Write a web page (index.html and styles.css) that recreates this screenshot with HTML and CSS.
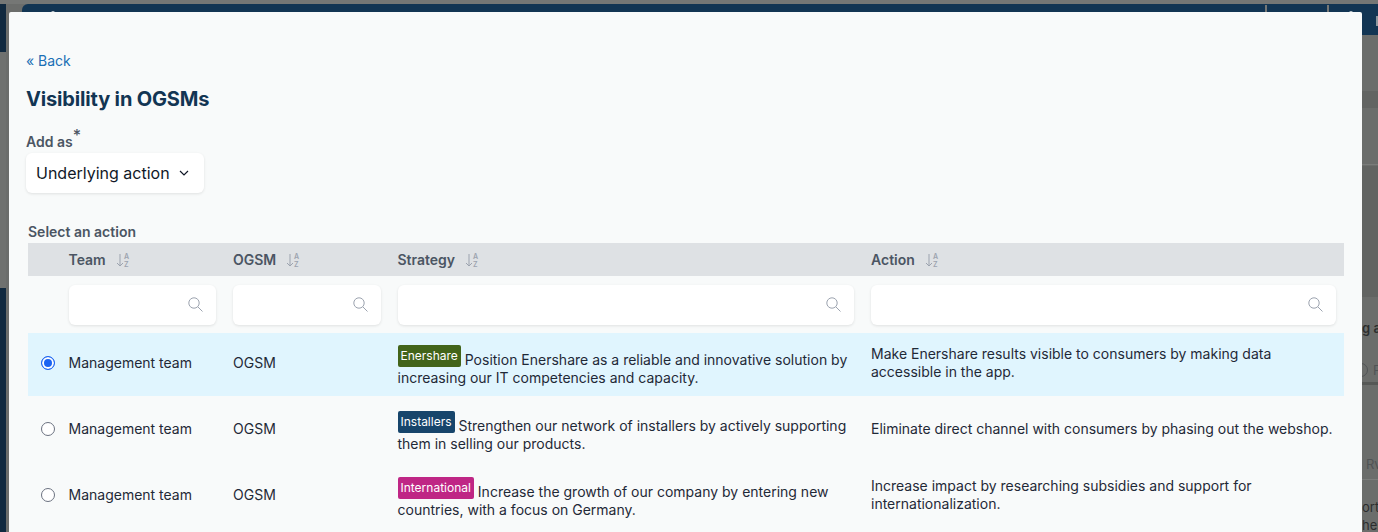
FILE: index.html
```html
<!DOCTYPE html>
<html lang="en">
<head>
<meta charset="utf-8">
<title>Visibility in OGSMs</title>
<link rel="stylesheet" href="styles.css">
</head>
<body>
<div class="backdrop">
  <div class="side-dark side-top"></div>
  <div class="side-dark side-bottom"></div>
  <div class="side-gray"></div>
  <div class="top-bar"><span class="sep sep-a"></span><span class="sep sep-b"></span><span class="chip"></span></div>
  <div class="bump bump-a"></div>
  <div class="bump bump-b"></div>
  <div class="band band-1"></div>
  <div class="band band-2"></div>
  <div class="band band-3"></div>
  <div class="band band-4"></div>
  <div class="band band-5"></div>
  <div class="peek peek-1">g a</div>
  <div class="peek-ring"></div>
  <div class="peek peek-2">F</div>
  <div class="peek peek-3">Rv</div>
  <div class="peek peek-4">ort<br>her</div>
</div>
<main class="modal">
  <a class="back" href="#">« Back</a>
  <h1 class="title">Visibility in OGSMs</h1>
  <label class="label label-add">Add as<sup class="req">*</sup></label>
  <div class="select">
    <span>Underlying action</span>
    <svg class="chev" width="10" height="6" viewBox="0 0 10 6"><path d="M1 1l4 4 4-4" fill="none" stroke="#111827" stroke-width="1.2"/></svg>
  </div>
  <div class="label label-table">Select an action</div>
  <div class="table">
    <div class="row head">
      <div></div>
      <div class="hcell">Team <svg class="sort" width="14" height="14" viewBox="0 0 14 14"><path d="M4 1v12M1 10l3 3 3-3" fill="none" stroke="#9ca3af"/><text x="8" y="6" class="az">A</text><text x="8" y="13.500" class="az">Z</text></svg></div>
      <div class="hcell">OGSM <svg class="sort" width="14" height="14" viewBox="0 0 14 14"><path d="M4 1v12M1 10l3 3 3-3" fill="none" stroke="#9ca3af"/><text x="8" y="6" class="az">A</text><text x="8" y="13.500" class="az">Z</text></svg></div>
      <div class="hcell">Strategy <svg class="sort" width="14" height="14" viewBox="0 0 14 14"><path d="M4 1v12M1 10l3 3 3-3" fill="none" stroke="#9ca3af"/><text x="8" y="6" class="az">A</text><text x="8" y="13.500" class="az">Z</text></svg></div>
      <div class="hcell">Action <svg class="sort" width="14" height="14" viewBox="0 0 14 14"><path d="M4 1v12M1 10l3 3 3-3" fill="none" stroke="#9ca3af"/><text x="8" y="6" class="az">A</text><text x="8" y="13.500" class="az">Z</text></svg></div>
    </div>
    <div class="row filters">
      <div></div>
      <div class="search"><svg width="15" height="15" viewBox="0 0 15 15"><circle cx="6" cy="6" r="5.200" fill="none" stroke="#9ca3af"/><path d="M9.800 9.800L14.500 14.500" stroke="#9ca3af"/></svg></div>
      <div class="search"><svg width="15" height="15" viewBox="0 0 15 15"><circle cx="6" cy="6" r="5.200" fill="none" stroke="#9ca3af"/><path d="M9.800 9.800L14.500 14.500" stroke="#9ca3af"/></svg></div>
      <div class="search"><svg width="15" height="15" viewBox="0 0 15 15"><circle cx="6" cy="6" r="5.200" fill="none" stroke="#9ca3af"/><path d="M9.800 9.800L14.500 14.500" stroke="#9ca3af"/></svg></div>
      <div class="search"><svg width="15" height="15" viewBox="0 0 15 15"><circle cx="6" cy="6" r="5.200" fill="none" stroke="#9ca3af"/><path d="M9.800 9.800L14.500 14.500" stroke="#9ca3af"/></svg></div>
    </div>
    <div class="row item selected">
      <div class="radio-cell"><span class="radio on"></span></div>
      <div>Management team</div>
      <div>OGSM</div>
      <div class="strategy"><span class="tag green">Enershare</span> Position Enershare as a reliable and innovative solution by increasing our IT competencies and capacity.</div>
      <div>Make Enershare results visible to consumers by making data accessible in the app.</div>
    </div>
    <div class="row item">
      <div class="radio-cell"><span class="radio"></span></div>
      <div>Management team</div>
      <div>OGSM</div>
      <div class="strategy"><span class="tag navy">Installers</span> Strengthen our network of installers by actively supporting them in selling our products.</div>
      <div>Eliminate direct channel with consumers by phasing out the webshop.</div>
    </div>
    <div class="row item">
      <div class="radio-cell"><span class="radio"></span></div>
      <div>Management team</div>
      <div>OGSM</div>
      <div class="strategy"><span class="tag pink">International</span> Increase the growth of our company by entering new countries, with a focus on Germany.</div>
      <div>Increase impact by researching subsidies and support for internationalization.</div>
    </div>
  </div>
</main>
</body>
</html>
```
FILE: styles.css
```css
* { box-sizing: border-box; }
html, body { margin: 0; height: 100%; overflow: hidden; }
body { background: #6b6d6b; font-family: Inter, "Liberation Sans", sans-serif; color: #1f2937; position: relative; }
.backdrop { position: absolute; inset: 0; overflow: hidden; }
.side-dark { position: absolute; left: 0; width: 6px; background: #10293f; }
.side-top { top: 0; height: 52px; }
.side-bottom { top: 288px; bottom: 0; }
.side-gray { position: absolute; left: 0; top: 52px; width: 6px; height: 236px; background: #6f716f; }
.top-bar { position: absolute; left: 22px; right: 0; top: 4px; height: 31px; background: #123553; border-radius: 6px 0 0 0; }
.top-bar::before { content: ""; position: absolute; left: -22px; right: 0; top: -4px; height: 4px; background: #757775; }
.sep { position: absolute; top: 1px; width: 2px; height: 30px; background: #767876; }
.sep-a { left: 1243px; }
.sep-b { left: 1305px; }
.chip { position: absolute; left: 1354px; top: 12px; width: 2px; height: 10px; background: #8e979e; }
.bump { position: absolute; top: 11px; width: 4px; height: 2px; background: #c9d0d5; border-radius: 2px 2px 0 0; }
.bump-a { left: 51px; }
.bump-b { left: 1349px; }
.band { position: absolute; left: 1362px; right: 0; }
.band-1 { top: 91px; height: 17px; background: #626462; }
.band-2 { top: 108px; height: 57px; background: #6b6d6b; border-bottom: 1px solid #7a7c7a; }
.band-3 { top: 166px; height: 131px; background: #626462; }
.band-4 { top: 382px; height: 3px; background: #565856; }
.band-5 { top: 479px; height: 1px; background: #7b7d7b; }
.peek { position: absolute; left: 1362px; font-size: 13px; line-height: 18px; color: #2b2d2e; white-space: nowrap; }
.peek-1 { top: 319px; font-weight: 600; }
.peek-ring { position: absolute; left: 1354px; top: 363px; width: 14px; height: 14px; border: 1px solid #505355; border-radius: 50%; }
.peek-2 { top: 361px; left: 1373px; color: #505355; }
.peek-3 { top: 455px; left: 1366px; color: #505355; }
.peek-4 { top: 498px; }
.modal { position: absolute; left: 9px; top: 12px; width: 1353px; height: 540px; background: #f8fafa; padding: 40px 18px 0 17px; border-radius: 2px; }
.back { display: block; color: #1a6fb5; font-size: 14px; line-height: 17px; text-decoration: none; }
.title { margin: 18px 0 0; font-size: 20px; line-height: 24px; font-weight: 700; color: #123553; letter-spacing: -.16px; }
.label { display: block; font-size: 14px; line-height: 17px; font-weight: 600; color: #4b5563; }
.label-add { margin-top: 22px; }
.req { font-size: 16px; line-height: 0; font-weight: 500; }
.select { margin-top: 3px; width: 178px; height: 40px; background: #fff; border-radius: 6px; box-shadow: 0 1px 3px rgba(0,0,0,.1); display: flex; align-items: center; justify-content: space-between; padding: 0 15px 0 10px; font-size: 16px; color: #111827; }
.label-table { margin: 30px 0 0 2px; }
.table { margin-left: 2px; width: 1316px; font-size: 14px; line-height: 18px; }
.row { display: grid; grid-template-columns: 40.500px 164.500px 164.500px 473.500px 1fr; align-items: center; }
.head { height: 33px; background: #dee1e4; margin-top: 3px; }
.hcell { font-weight: 600; color: #4b5563; display: flex; align-items: center; gap: 10px; }
.sort { display: block; }
.az { font-size: 7px; fill: #9ca3af; font-family: Inter, sans-serif; }
.filters { height: 57px; }
.search { height: 40px; margin-right: 17px; background: #fff; border-radius: 6px; box-shadow: 0 1px 3px rgba(0,0,0,.1); display: flex; align-items: center; justify-content: flex-end; padding-right: 13px; }
.filters .search:last-child { margin-right: 8px; }
.item { height: 66px; color: #1f2937; }
.item > div:nth-child(n+4) { padding-right: 6px; }
.item > .strategy { padding-top: 6px; }
.selected { height: 63px; padding-bottom: 3px; background: #e0f5fe; }
.radio-cell { display: flex; justify-content: center; }
.radio { width: 14px; height: 14px; border-radius: 50%; background: #fff; border: 1px solid #6b7280; display: block; }
.radio.on { border: 1px solid #1c64f2; background: #1c64f2; box-shadow: inset 0 0 0 2px #fff; }
.tag { display: inline-block; font-size: 12px; line-height: 16px; padding: 3px; color: #fff; border-radius: 2px; vertical-align: 5px; }
.green { background: #42641a; }
.navy { background: #17456b; }
.pink { background: #bf2685; }
```
